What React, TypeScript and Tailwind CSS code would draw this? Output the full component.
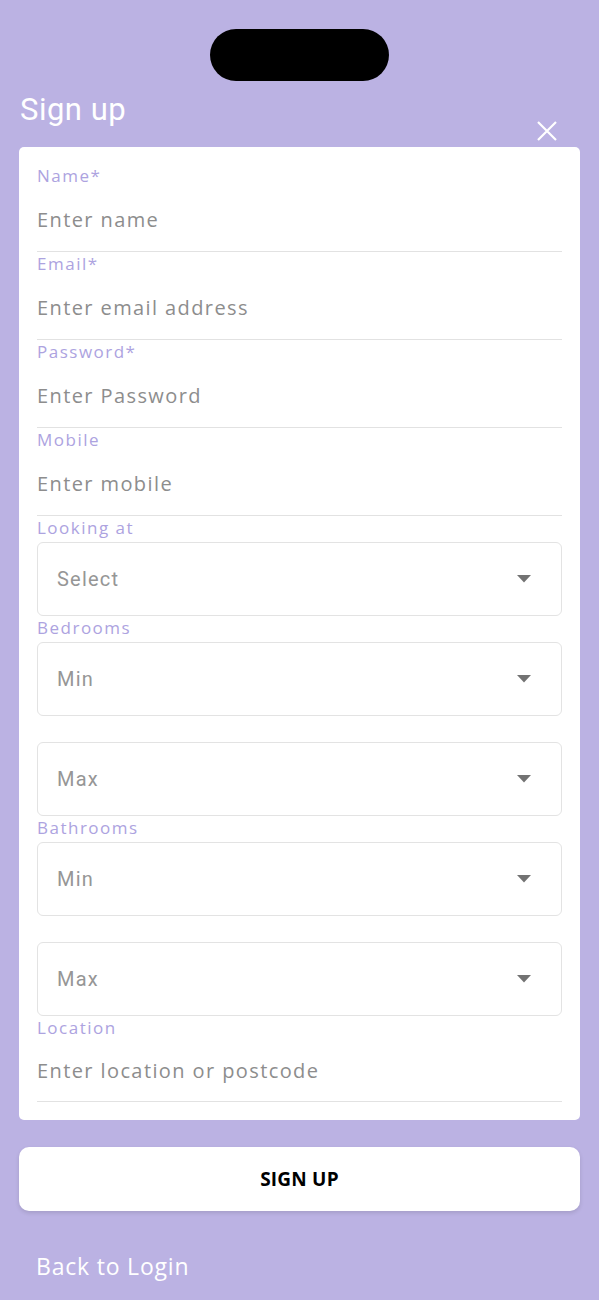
import React from 'react';

const TextField: React.FC<{ label: string; placeholder: string; type?: string; inputH?: string }> = ({
  label,
  placeholder,
  type = 'text',
  inputH = 'h-[64px]',
}) => (
  <div className="flex flex-col">
    <label className="h-[24px] flex items-center text-[17px] text-[#ada3df] tracking-[1.5px]">{label}</label>
    <input
      type={type}
      placeholder={placeholder}
      className={`${inputH} w-full border-b border-[#e2e2e2] bg-transparent text-[20px] tracking-[1.4px] text-gray-700 outline-none placeholder:text-[#8d8d8d]`}
    />
  </div>
);

const SelectField: React.FC<{ label?: string; value: string }> = ({ label, value }) => (
  <div className="flex flex-col">
    <div className="h-[24px] flex items-center text-[17px] text-[#ada3df] tracking-[1.5px]">{label}</div>
    <div className="mt-[2px] h-[74px] rounded-[6px] border border-[#e3e3e3] flex items-center justify-between pl-[19px] pr-[30px]">
      <span className="text-[20px] tracking-[1.2px] text-[#969696]" style={{ fontFamily: 'Roboto, sans-serif' }}>
        {value}
      </span>
      <svg width="14" height="8" viewBox="0 0 14 8">
        <path d="M0 0 L14 0 L7 7.5 Z" fill="#727272" />
      </svg>
    </div>
  </div>
);

const App: React.FC = () => {
  return (
    <div className="min-h-[1300px] bg-[#bbb2e3] flex flex-col" style={{ fontFamily: '"Open Sans", sans-serif' }}>
      {/* notch */}
      <div className="mt-[29px] mx-auto w-[179px] h-[52px] rounded-full bg-black" />

      {/* Header */}
      <div className="mt-[11px] flex justify-between items-start pl-[20px] pr-[42px]">
        <h1 className="text-[31px] leading-[36px] tracking-[0.5px] text-white" style={{ fontFamily: 'Roboto, sans-serif' }}>
          Sign up
        </h1>
        <button className="mt-[29px] w-[20px] h-[20px]">
          <svg width="20" height="20" viewBox="0 0 20 20" fill="none" stroke="white" strokeWidth="2.2">
            <path d="M1 1 L19 19 M19 1 L1 19" />
          </svg>
        </button>
      </div>

      {/* Form card */}
      <div className="mt-[6px] mx-[19px] bg-white rounded-[5px] px-[18px] pt-[17px] pb-[18px] flex flex-col">
        <TextField label="Name*" placeholder="Enter name" />
        <TextField label="Email*" placeholder="Enter email address" type="email" />
        <TextField label="Password*" placeholder="Enter Password" type="password" />
        <TextField label="Mobile" placeholder="Enter mobile" />
        <SelectField label="Looking at" value="Select" />
        <SelectField label="Bedrooms" value="Min" />
        <SelectField value="Max" />
        <SelectField label="Bathrooms" value="Min" />
        <SelectField value="Max" />
        <TextField label="Location" placeholder="Enter location or postcode" inputH="h-[62px]" />
      </div>

      {/* Submit */}
      <button className="mt-[27px] mx-[19px] h-[64px] rounded-[10px] bg-white shadow-[0_2px_4px_rgba(0,0,0,0.12)] text-[19px] font-bold text-black tracking-[0.2px]">
        SIGN UP
      </button>

      <button className="mt-[40px] ml-[36px] self-start text-[23px] leading-[30px] tracking-[0.8px] text-white">
        Back to Login
      </button>
    </div>
  );
};

export default App;
